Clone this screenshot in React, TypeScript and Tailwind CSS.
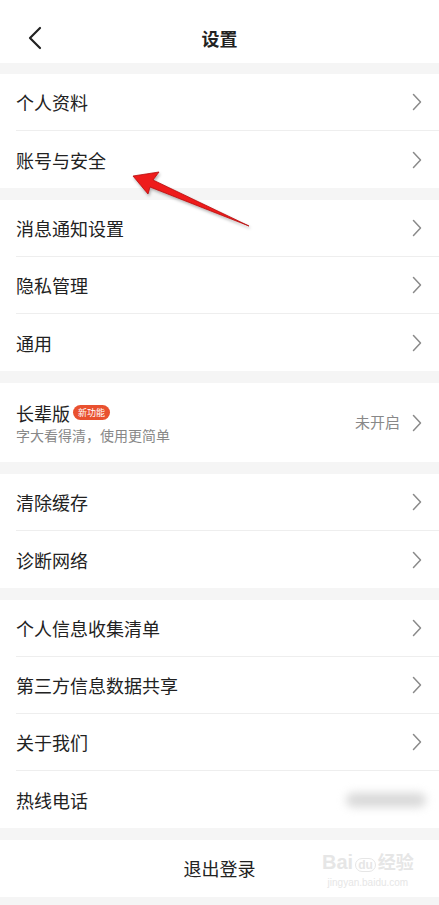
import React from 'react';

const font = { fontFamily: '"Noto Sans CJK SC", "Noto Sans", sans-serif' };

const Chevron: React.FC = () => (
  <svg width="10" height="18" viewBox="0 0 10 18" fill="none" className="shrink-0">
    <path d="M1.5 1.5 L8.5 9 L1.5 16.5" stroke="#8a8a8a" strokeWidth="1.5" strokeLinejoin="round" strokeLinecap="round" />
  </svg>
);

const Row: React.FC<{ label: string; last?: boolean; right?: React.ReactNode }> = ({ label, last, right }) => (
  <div className="pl-4">
    <div className={`h-[57px] flex items-center justify-between pr-[17px] ${last ? '' : 'border-b border-[#eeeeee]'}`}>
      <span className="text-[18px] text-[#222222] leading-none">{label}</span>
      {right ?? <Chevron />}
    </div>
  </div>
);

const Section: React.FC<{ children: React.ReactNode }> = ({ children }) => (
  <div className="bg-white">{children}</div>
);

const App: React.FC = () => {
  return (
    <div className="relative w-[439px] h-[905px] bg-[#f5f5f5] overflow-hidden" style={font}>
      {/* header */}
      <div className="h-[63px] bg-white flex items-center pt-[13px]">
        <div className="w-[70px] pl-[27px] flex items-center">
          <svg width="16" height="24" viewBox="0 0 16 24" fill="none">
            <path d="M13 2 L3 12 L13 22" stroke="#222" strokeWidth="2.2" strokeLinecap="round" strokeLinejoin="round" />
          </svg>
        </div>
        <div className="flex-1 text-center text-[18px] font-bold text-[#222] pr-[70px]">设置</div>
      </div>

      <div className="flex flex-col gap-[12px] pt-[11px]">
        <Section>
          <Row label="个人资料" />
          <Row label="账号与安全" last />
        </Section>

        <Section>
          <Row label="消息通知设置" />
          <Row label="隐私管理" />
          <Row label="通用" last />
        </Section>

        <Section>
          <div className="h-[79px] pl-4 pr-[17px] flex items-center justify-between">
            <div className="flex flex-col gap-[6px]">
              <div className="flex items-center gap-[3px]">
                <span className="text-[18px] text-[#222] leading-none">长辈版</span>
                <span className="bg-[#e9512f] text-white text-[9px] leading-none rounded-full px-[5px] py-[3px]">新功能</span>
              </div>
              <span className="text-[14px] text-[#888] leading-none">字大看得清，使用更简单</span>
            </div>
            <div className="flex items-center gap-[12px]">
              <span className="text-[15px] text-[#888]">未开启</span>
              <Chevron />
            </div>
          </div>
        </Section>

        <Section>
          <Row label="清除缓存" />
          <Row label="诊断网络" last />
        </Section>

        <Section>
          <Row label="个人信息收集清单" />
          <Row label="第三方信息数据共享" />
          <Row label="关于我们" />
          <Row
            label="热线电话"
            last
            right={<div className="w-[80px] h-[14px] rounded-full bg-[#d8d8d8] blur-[5px] mr-[-4px]" />}
          />
        </Section>

        <Section>
          <div className="h-[57px] flex items-center justify-center text-[18px] text-[#222]">退出登录</div>
        </Section>
      </div>

      {/* watermark */}
      <div className="absolute left-[322px] top-[852px] flex flex-col items-center text-[#e6e6e6] pointer-events-none" style={{ fontFamily: '"Liberation Sans", "Noto Sans CJK SC", sans-serif' }}>
        <div className="flex items-end gap-[2px] leading-none">
          <span className="text-[20px] font-bold">Bai</span>
          <span className="text-[12px] font-bold border border-[#e6e6e6] rounded-full px-[2px]">du</span>
          <span className="text-[18px] font-bold">经验</span>
        </div>
        <span className="text-[10px] mt-[3px]">jingyan.baidu.com</span>
      </div>

      {/* annotation arrow */}
      <svg className="absolute left-0 top-0 pointer-events-none" width="439" height="905" viewBox="0 0 439 905">
        <defs>
          <filter id="sh" x="-20%" y="-20%" width="140%" height="140%">
            <feDropShadow dx="1" dy="2" stdDeviation="1.5" floodColor="#000" floodOpacity="0.3" />
          </filter>
        </defs>
        <polygon
          points="133,176 159,172 153,180 249,226 150,187 148,194"
          fill="#ee1b1b"
          stroke="#b50f0f"
          strokeWidth="0.8"
          strokeLinejoin="round"
          filter="url(#sh)"
        />
      </svg>
    </div>
  );
};

export default App;
